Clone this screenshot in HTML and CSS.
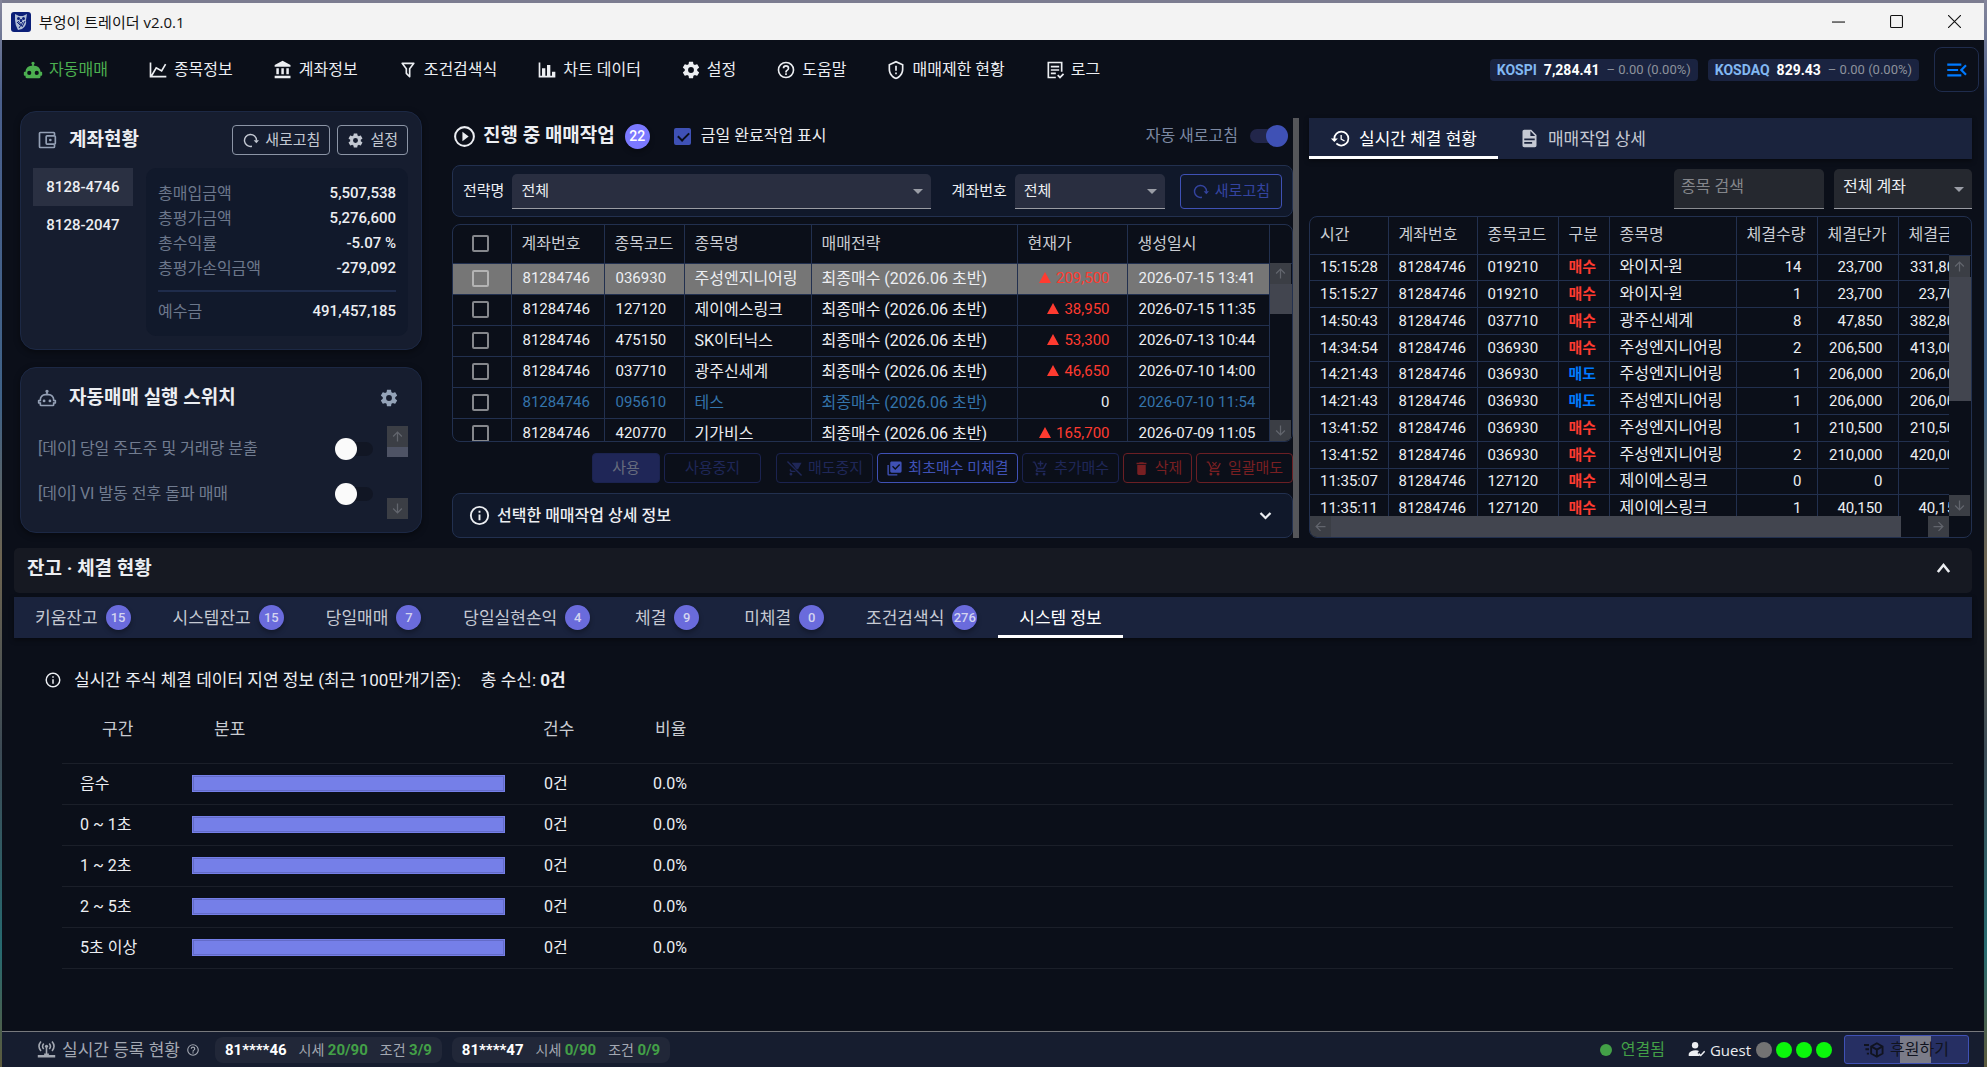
FILE: index.html
```
<!DOCTYPE html>
<html lang="ko">
    <head>
        <meta charset="utf-8">
        <title>부엉이 트레이더 v2.0.1</title>
        <link rel="stylesheet" href="styles.css">
    </head>
    <body>
        <!--ICONS-->
        <svg class="sprite" width="0" height="0">
            <symbol id="robot" viewBox="0 0 24 24"><path d="M12,2A2,2 0 0,1 14,4C14,4.74 13.6,5.39 13,5.73V7H14A7,7 0 0,1 21,14H22A1,1 0 0,1 23,15V18A1,1 0 0,1 22,19H21V20A2,2 0 0,1 19,22H5A2,2 0 0,1 3,20V19H2A1,1 0 0,1 1,18V15A1,1 0 0,1 2,14H3A7,7 0 0,1 10,7H11V5.73C10.4,5.39 10,4.74 10,4A2,2 0 0,1 12,2M7.5,13A2.5,2.5 0 0,0 5,15.5A2.5,2.5 0 0,0 7.5,18A2.5,2.5 0 0,0 10,15.5A2.5,2.5 0 0,0 7.5,13M16.5,13A2.5,2.5 0 0,0 14,15.5A2.5,2.5 0 0,0 16.5,18A2.5,2.5 0 0,0 19,15.5A2.5,2.5 0 0,0 16.5,13Z"/></symbol>
            <symbol id="robot-o" viewBox="0 0 24 24"><path d="M12,2A2,2 0 0,1 14,4C14,4.74 13.6,5.39 13,5.73V7H14A7,7 0 0,1 21,14H22A1,1 0 0,1 23,15V18A1,1 0 0,1 22,19H21V20A2,2 0 0,1 19,22H5A2,2 0 0,1 3,20V19H2A1,1 0 0,1 1,18V15A1,1 0 0,1 2,14H3A7,7 0 0,1 10,7H11V5.73C10.4,5.39 10,4.74 10,4A2,2 0 0,1 12,2M10,9A5,5 0 0,0 5,14V16H3V17H5V20H19V17H21V16H19V14A5,5 0 0,0 14,9H10Z" fill-rule="evenodd"/><circle cx="8.5" cy="15.5" r="1.7"/><circle cx="15.5" cy="15.5" r="1.7"/></symbol>
            <symbol id="line" viewBox="0 0 24 24"><path d="M16,11.78L20.24,4.45L21.97,5.45L16.74,14.5L10.23,10.75L5.46,19H22V21H2V3H4V17.54L9.5,8L16,11.78Z"/></symbol>
            <symbol id="bank" viewBox="0 0 24 24"><path d="M11.5,1L2,6V8H21V6M16,10V17H19V10M2,22H21V19H2M10,10V17H13V10M4,10V17H7V10H4Z"/></symbol>
            <symbol id="filter" viewBox="0 0 24 24"><path d="M15,19.88C15.04,20.18 14.94,20.5 14.71,20.71C14.32,21.1 13.69,21.1 13.3,20.71L9.29,16.7C9.06,16.47 8.96,16.16 9,15.87V10.75L4.21,4.62C3.87,4.19 3.95,3.56 4.38,3.22C4.57,3.08 4.78,3 5,3H19C19.22,3 19.43,3.08 19.62,3.22C20.05,3.56 20.13,4.19 19.79,4.62L15,10.75V19.88M7.04,5L11,10.06V15.58L13,17.58V10.05L16.96,5H7.04Z"/></symbol>
            <symbol id="bars" viewBox="0 0 24 24"><path d="M22,21H2V3H4V19H6V10H10V19H12V6H16V19H18V14H22V21Z"/></symbol>
            <symbol id="cog" viewBox="0 0 24 24"><path d="M12,15.5A3.5,3.5 0 0,1 8.5,12A3.5,3.5 0 0,1 12,8.5A3.5,3.5 0 0,1 15.5,12A3.5,3.5 0 0,1 12,15.5M19.43,12.97C19.47,12.65 19.5,12.33 19.5,12C19.5,11.67 19.47,11.34 19.43,11L21.54,9.37C21.73,9.22 21.78,8.95 21.66,8.73L19.66,5.27C19.54,5.05 19.27,4.96 19.05,5.05L16.56,6.05C16.04,5.66 15.5,5.32 14.87,5.07L14.5,2.42C14.46,2.18 14.25,2 14,2H10C9.75,2 9.54,2.18 9.5,2.42L9.13,5.07C8.5,5.32 7.96,5.66 7.44,6.05L4.95,5.05C4.73,4.96 4.46,5.05 4.34,5.27L2.34,8.73C2.21,8.95 2.27,9.22 2.46,9.37L4.57,11C4.53,11.34 4.5,11.67 4.5,12C4.5,12.33 4.53,12.65 4.57,12.97L2.46,14.63C2.27,14.78 2.21,15.05 2.34,15.27L4.34,18.73C4.46,18.95 4.73,19.03 4.95,18.95L7.44,17.94C7.96,18.34 8.5,18.68 9.13,18.93L9.5,21.58C9.54,21.82 9.75,22 10,22H14C14.25,22 14.46,21.82 14.5,21.58L14.87,18.93C15.5,18.67 16.04,18.34 16.56,17.94L19.05,18.95C19.27,19.03 19.54,18.95 19.66,18.73L21.66,15.27C21.78,15.05 21.73,14.78 21.54,14.63L19.43,12.97Z"/></symbol>
            <symbol id="help" viewBox="0 0 24 24"><path d="M11,18H13V16H11V18M12,2A10,10 0 0,0 2,12A10,10 0 0,0 12,22A10,10 0 0,0 22,12A10,10 0 0,0 12,2M12,20C7.59,20 4,16.41 4,12C4,7.59 7.59,4 12,4C16.41,4 20,7.59 20,12C20,16.41 16.41,20 12,20M12,6A4,4 0 0,0 8,10H10A2,2 0 0,1 12,8A2,2 0 0,1 14,10C14,12 11,11.75 11,15H13C13,12.75 16,12.5 16,10A4,4 0 0,0 12,6Z"/></symbol>
            <symbol id="shield" viewBox="0 0 24 24"><path d="M21,11C21,16.55 17.16,21.74 12,23C6.84,21.74 3,16.55 3,11V5L12,1L21,5V11M12,21C15.75,20 19,15.54 19,11.22V6.3L12,3.18L5,6.3V11.22C5,15.54 8.25,20 12,21M11,7H13V13H11V7M11,15H13V17H11V15Z"/></symbol>
            <symbol id="log" viewBox="0 0 24 24"><path d="M3 2H21V14H19V4H5V20H13V22H3ZM7 7H17V9H7ZM7 11H17V13H7ZM7 15H13V17H7ZM14.5 19L16 17.5L18 19.5L21.5 16L23 17.5L18 22.5Z"/></symbol>
            <symbol id="menu" viewBox="0 0 24 24"><path d="M21,15.61L19.59,17L14.58,12L19.59,7L21,8.39L17.44,12L21,15.61M3,6H16V8H3V6M3,13V11H13V13H3M3,18V16H16V18H3Z"/></symbol>
            <symbol id="wallet" viewBox="0 0 24 24"><g fill="none" stroke="currentColor" stroke-width="2"><path d="M21 6V4Q21 3 20 3H4Q3 3 3 4V20Q3 21 4 21H20Q21 21 21 20V18"/><rect x="11" y="7" width="11" height="10" rx="1"/></g><circle cx="16" cy="12" r="1.6"/></symbol>
            <symbol id="refresh" viewBox="0 0 24 24"><path d="M14 20.2A8.5 8.5 0 1 1 20.5 12" fill="none" stroke="currentColor" stroke-width="2"/><path d="M16.5 11.5H24L20.2 16Z"/></symbol>
            <symbol id="play" viewBox="0 0 24 24"><path d="M12,20C7.59,20 4,16.41 4,12C4,7.59 7.59,4 12,4C16.41,4 20,7.59 20,12C20,16.41 16.41,20 12,20M12,2A10,10 0 0,0 2,12A10,10 0 0,0 12,22A10,10 0 0,0 22,12A10,10 0 0,0 12,2M10,16.5L16,12L10,7.5V16.5Z"/></symbol>
            <symbol id="info" viewBox="0 0 24 24"><path d="M11,9H13V7H11M12,20C7.59,20 4,16.41 4,12C4,7.59 7.59,4 12,4C16.41,4 20,7.59 20,12C20,16.41 16.41,20 12,20M12,2A10,10 0 0,0 2,12A10,10 0 0,0 12,22A10,10 0 0,0 22,12A10,10 0 0,0 12,2M11,17H13V11H11V17Z"/></symbol>
            <symbol id="history" viewBox="0 0 24 24"><path d="M13.5,8H12V13L16.28,15.54L17,14.33L13.5,12.25V8M13,3A9,9 0 0,0 4,12H1L4.96,16.03L9,12H6A7,7 0 0,1 13,5A7,7 0 0,1 20,12A7,7 0 0,1 13,19C11.07,19 9.32,18.21 8.06,16.94L6.64,18.36C8.27,20 10.5,21 13,21A9,9 0 0,0 22,12A9,9 0 0,0 13,3"/></symbol>
            <symbol id="doc" viewBox="0 0 24 24"><path d="M13,9H18.5L13,3.5V9M6,2H14L20,8V20A2,2 0 0,1 18,22H6C4.89,22 4,21.1 4,20V4C4,2.89 4.89,2 6,2M15,18V16H6V18H15M18,14V12H6V14H18Z"/></symbol>
            <symbol id="trash" viewBox="0 0 24 24"><path d="M19,4H15.5L14.5,3H9.5L8.5,4H5V6H19M6,19A2,2 0 0,0 8,21H16A2,2 0 0,0 18,19V7H6V19Z"/></symbol>
            <symbol id="multi" viewBox="0 0 24 24"><path d="M22,16A2,2 0 0,1 20,18H8C6.89,18 6,17.1 6,16V4C6,2.89 6.89,2 8,2H20A2,2 0 0,1 22,4V16M16,20V22H4A2,2 0 0,1 2,20V7H4V20H16M13,14L20,7L18.59,5.59L13,11.17L9.91,8.09L8.5,9.5L13,14Z"/></symbol>
            <symbol id="cart" viewBox="0 0 24 24"><path d="M7 18A2 2 0 1 0 7 22A2 2 0 1 0 7 18M17 18A2 2 0 1 0 17 22A2 2 0 1 0 17 18M1 2H4.3L8.5 11H15.5L19.4 4L21.1 5L17.3 12A2 2 0 0 1 15.6 13H8.1L7.2 15H19V17H7A2 2 0 0 1 5.3 14L6.6 11.6L3 4H1Z"/><path d="M11 1H13V4H16V6H13V9H11V6H8V4H11Z"/></symbol>
            <symbol id="cart-x" viewBox="0 0 24 24"><path d="M7 18A2 2 0 1 0 7 22A2 2 0 1 0 7 18M17 18A2 2 0 1 0 17 22A2 2 0 1 0 17 18M1 2H4.3L8.5 11H15.5L19.4 4L21.1 5L17.3 12A2 2 0 0 1 15.6 13H8.1L7.2 15H19V17H7A2 2 0 0 1 5.3 14L6.6 11.6L3 4H1Z"/><path d="M9 3L15 9M15 3L9 9" stroke="currentColor" stroke-width="1.6"/></symbol>
            <symbol id="cart-off" viewBox="0 0 24 24"><path d="M8 4H22L17 13H15ZM7 18A2 2 0 1 0 7 22A2 2 0 1 0 7 18M6 12L8 15H12L14 17H7Q5 16 5 14Z"/><path d="M2 2L22 22" stroke="currentColor" stroke-width="2"/></symbol>
            <symbol id="tower" viewBox="0 0 24 24"><g fill="none" stroke="currentColor" stroke-width="2"><path d="M5 2Q0 8 5 14M19 2Q24 8 19 14M8.5 4.5Q5.5 8 8.5 11.5M15.5 4.5Q18.5 8 15.5 11.5M12 9V19"/></g><circle cx="12" cy="8" r="2"/><path d="M1 19H9V17H15V19H23V22H1Z"/></symbol>
            <symbol id="user" viewBox="0 0 24 24"><circle cx="10" cy="6" r="4.5"/><path d="M1 21V18Q3 13 11 13Q14 13 15.5 14L13.5 17L17 21Z"/><path d="M15 17.5L18 20.5L23.5 14.5" fill="none" stroke="currentColor" stroke-width="2"/></symbol>
            <symbol id="cube" viewBox="0 0 28 24"><g fill="none" stroke="currentColor" stroke-width="2.6"><path d="M18 2.5L26 7V17L18 21.5L10 17V7ZM10 7L18 11.5L26 7M18 11.5V21"/><path d="M0 5H7M2 11H7M4 17H7"/></g></symbol>
            <symbol id="up" viewBox="0 0 24 24"><path d="M12 20V5M5 12L12 5L19 12" fill="none" stroke="currentColor" stroke-width="2"/></symbol>
            <symbol id="down" viewBox="0 0 24 24"><path d="M12 4V19M5 12L12 19L19 12" fill="none" stroke="currentColor" stroke-width="2"/></symbol>
            <symbol id="left" viewBox="0 0 24 24"><path d="M20 12H5M12 5L5 12L12 19" fill="none" stroke="currentColor" stroke-width="2"/></symbol>
            <symbol id="right" viewBox="0 0 24 24"><path d="M4 12H19M12 5L19 12L12 19" fill="none" stroke="currentColor" stroke-width="2"/></symbol>
            <symbol id="chev-down" viewBox="0 0 24 24"><path d="M4 8L12 16L20 8" fill="none" stroke="currentColor" stroke-width="3.6"/></symbol>
            <symbol id="chev-up" viewBox="0 0 24 24"><path d="M4 17L12 7L20 17" fill="none" stroke="currentColor" stroke-width="3.6"/></symbol>
        </svg>

        <div class="window">
            <!--TITLE BAR-->
            <div class="titlebar">
                <svg class="logo" viewBox="0 0 20 20">
                    <rect width="20" height="20" rx="3" fill="#0b1f78"/>
                    <path d="M4 2L8 4H12L16 2L15 8Q16 14 11 17L7 18Q4 13 4 8Z" fill="#aebcd6"/>
                    <circle cx="7.5" cy="6.5" r="1.5" fill="#0b1f78"/><circle cx="12.5" cy="6.5" r="1.5" fill="#0b1f78"/>
                    <path d="M10 7L11 9L10 10L9 9ZM6 10L9 13M7 9L11 14M12 10L8 16M14 9L11 15" stroke="#0b1f78" fill="#0b1f78"/>
                </svg>
                <span class="title-text">부엉이 트레이더 v2.0.1</span>
                <div class="win-buttons">
                    <button aria-label="최소화"><svg viewBox="0 0 12 12"><path d="M0 6.5H12"/></svg></button>
                    <button aria-label="최대화"><svg viewBox="0 0 12 12"><rect x=".5" y=".5" width="11" height="11" rx="1"/></svg></button>
                    <button aria-label="닫기"><svg viewBox="0 0 12 12"><path d="M0 0L12 12M12 0L0 12"/></svg></button>
                </div>
            </div>

            <!--TOP MENU-->
            <div class="topbar">
                <nav class="menu">
                    <a href="#" class="on"><svg><use href="#robot"/></svg>자동매매</a>
                    <a href="#"><svg><use href="#line"/></svg>종목정보</a>
                    <a href="#"><svg><use href="#bank"/></svg>계좌정보</a>
                    <a href="#"><svg><use href="#filter"/></svg>조건검색식</a>
                    <a href="#"><svg><use href="#bars"/></svg>차트 데이터</a>
                    <a href="#"><svg><use href="#cog"/></svg>설정</a>
                    <a href="#"><svg><use href="#help"/></svg>도움말</a>
                    <a href="#"><svg><use href="#shield"/></svg>매매제한 현황</a>
                    <a href="#"><svg><use href="#log"/></svg>로그</a>
                </nav>
                <div class="index"><b class="index-name">KOSPI</b><b>7,284.41</b><span>– 0.00 (0.00%)</span></div>
                <div class="index"><b class="index-name">KOSDAQ</b><b>829.43</b><span>– 0.00 (0.00%)</span></div>
                <button class="drawer" aria-label="메뉴"><svg><use href="#menu"/></svg></button>
            </div>

            <div class="main">
                <!--LEFT-->
                <div class="side">
                    <section class="card account">
                        <div class="card-head">
                            <svg><use href="#wallet"/></svg>
                            <h2>계좌현황</h2>
                            <button class="outline"><svg><use href="#refresh"/></svg>새로고침</button>
                            <button class="outline"><svg><use href="#cog"/></svg>설정</button>
                        </div>
                        <div class="account-body">
                            <div class="account-tabs">
                                <button class="on">8128-4746</button>
                                <button>8128-2047</button>
                            </div>
                            <dl class="sums">
                                <div><dt>총매입금액</dt><dd>5,507,538</dd></div>
                                <div><dt>총평가금액</dt><dd>5,276,600</dd></div>
                                <div><dt>총수익률</dt><dd>-5.07 %</dd></div>
                                <div><dt>총평가손익금액</dt><dd>-279,092</dd></div>
                                <div class="deposit"><dt>예수금</dt><dd>491,457,185</dd></div>
                            </dl>
                        </div>
                    </section>

                    <section class="card switches">
                        <div class="card-head">
                            <svg><use href="#robot-o"/></svg>
                            <h2>자동매매 실행 스위치</h2>
                            <button class="plain" aria-label="설정"><svg><use href="#cog"/></svg></button>
                        </div>
                        <div class="switch-body">
                            <div class="switch-list">
                                <div><label for="sw1">[데이] 당일 주도주 및 거래량 분출</label><input type="checkbox" class="switch" id="sw1"></div>
                                <div><label for="sw2">[데이] VI 발동 전후 돌파 매매</label><input type="checkbox" class="switch" id="sw2"></div>
                            </div>
                            <div class="scroll"><i><svg><use href="#up"/></svg></i><b class="short"></b><i class="end"><svg><use href="#down"/></svg></i></div>
                        </div>
                    </section>
                </div>

                <!--RUNNING JOBS-->
                <section class="jobs">
                    <div class="jobs-head">
                        <svg><use href="#play"/></svg>
                        <h2>진행 중 매매작업</h2>
                        <span class="badge bright">22</span>
                        <input type="checkbox" class="check" id="done" checked>
                        <label for="done">금일 완료작업 표시</label>
                        <label for="auto" class="auto">자동 새로고침</label>
                        <input type="checkbox" class="switch" id="auto" checked>
                    </div>
                    <div class="filters">
                        <label for="strategy">전략명</label>
                        <span class="select wide"><select id="strategy"><option>전체</option></select></span>
                        <label for="account" class="second">계좌번호</label>
                        <span class="select"><select id="account"><option>전체</option></select></span>
                        <button class="outline blue"><svg><use href="#refresh"/></svg>새로고침</button>
                    </div>
                    <div class="jobs-box">
                        <table class="jobs-table">
                            <colgroup><col class="w58"><col class="w93"><col class="w80"><col class="w127"><col><col class="w110"><col class="w142"><col class="w23"></colgroup>
                            <thead>
                                <tr><th><input type="checkbox" class="check" aria-label="전체 선택"></th><th>계좌번호</th><th>종목코드</th><th>종목명</th><th>매매전략</th><th>현재가</th><th>생성일시</th><th></th></tr>
                            </thead>
                            <tbody>
                                <tr class="selected"><td><input type="checkbox" class="check" aria-label="036930"></td><td class="n">81284746</td><td class="n">036930</td><td>주성엔지니어링</td><td>최종매수 (2026.06 초반)</td><td class="price">209,500</td><td class="n">2026-07-15 13:41</td><td></td></tr>
                                <tr><td><input type="checkbox" class="check" aria-label="127120"></td><td class="n">81284746</td><td class="n">127120</td><td>제이에스링크</td><td>최종매수 (2026.06 초반)</td><td class="price">38,950</td><td class="n">2026-07-15 11:35</td><td></td></tr>
                                <tr><td><input type="checkbox" class="check" aria-label="475150"></td><td class="n">81284746</td><td class="n">475150</td><td>SK이터닉스</td><td>최종매수 (2026.06 초반)</td><td class="price">53,300</td><td class="n">2026-07-13 10:44</td><td></td></tr>
                                <tr><td><input type="checkbox" class="check" aria-label="037710"></td><td class="n">81284746</td><td class="n">037710</td><td>광주신세계</td><td>최종매수 (2026.06 초반)</td><td class="price">46,650</td><td class="n">2026-07-10 14:00</td><td></td></tr>
                                <tr class="finished"><td><input type="checkbox" class="check" aria-label="095610"></td><td class="n">81284746</td><td class="n">095610</td><td>테스</td><td>최종매수 (2026.06 초반)</td><td class="price zero">0</td><td class="n">2026-07-10 11:54</td><td></td></tr>
                                <tr><td><input type="checkbox" class="check" aria-label="420770"></td><td class="n">81284746</td><td class="n">420770</td><td>기가비스</td><td>최종매수 (2026.06 초반)</td><td class="price">165,700</td><td class="n">2026-07-09 11:05</td><td></td></tr>
                            </tbody>
                        </table>
                        <div class="scroll over"><i><svg><use href="#up"/></svg></i><b class="mid"></b><i class="end"><svg><use href="#down"/></svg></i></div>
                    </div>
                    <div class="actions">
                        <button class="use">사용</button>
                        <button class="stop">사용중지</button>
                        <button class="halt"><svg><use href="#cart-off"/></svg>매도중지</button>
                        <button class="live"><svg><use href="#multi"/></svg>최초매수 미체결</button>
                        <button><svg><use href="#cart"/></svg>추가매수</button>
                        <button class="red"><svg><use href="#trash"/></svg>삭제</button>
                        <button class="red"><svg><use href="#cart-x"/></svg>일괄매도</button>
                    </div>
                    <button class="detail"><svg><use href="#info"/></svg><span>선택한 매매작업 상세 정보</span><svg class="chev"><use href="#chev-down"/></svg></button>
                </section>

                <div class="splitter"></div>

                <!--REALTIME FILLS-->
                <section class="fills">
                    <div class="tabs">
                        <button class="on"><svg><use href="#history"/></svg>실시간 체결 현황</button>
                        <button><svg><use href="#doc"/></svg>매매작업 상세</button>
                    </div>
                    <div class="fills-filter">
                        <input type="text" placeholder="종목 검색" aria-label="종목 검색">
                        <span class="select"><select aria-label="계좌"><option>전체 계좌</option></select></span>
                    </div>
                    <div class="fills-box">
                        <div class="fills-clip">
                            <table class="fills-table">
                                <colgroup><col class="w78"><col class="w89"><col class="w81"><col class="w51"><col class="w127"><col class="w81"><col class="w81"><col class="w81"></colgroup>
                                <thead>
                                    <tr><th>시간</th><th>계좌번호</th><th>종목코드</th><th>구분</th><th>종목명</th><th>체결수량</th><th>체결단가</th><th>체결금액</th></tr>
                                </thead>
                                <tbody>
                                    <tr><td>15:15:28</td><td>81284746</td><td>019210</td><td class="buy">매수</td><td class="name">와이지-원</td><td>14</td><td>23,700</td><td>331,800</td></tr>
                                    <tr><td>15:15:27</td><td>81284746</td><td>019210</td><td class="buy">매수</td><td class="name">와이지-원</td><td>1</td><td>23,700</td><td>23,700</td></tr>
                                    <tr><td>14:50:43</td><td>81284746</td><td>037710</td><td class="buy">매수</td><td class="name">광주신세계</td><td>8</td><td>47,850</td><td>382,800</td></tr>
                                    <tr><td>14:34:54</td><td>81284746</td><td>036930</td><td class="buy">매수</td><td class="name">주성엔지니어링</td><td>2</td><td>206,500</td><td>413,000</td></tr>
                                    <tr><td>14:21:43</td><td>81284746</td><td>036930</td><td class="sell">매도</td><td class="name">주성엔지니어링</td><td>1</td><td>206,000</td><td>206,000</td></tr>
                                    <tr><td>14:21:43</td><td>81284746</td><td>036930</td><td class="sell">매도</td><td class="name">주성엔지니어링</td><td>1</td><td>206,000</td><td>206,000</td></tr>
                                    <tr><td>13:41:52</td><td>81284746</td><td>036930</td><td class="buy">매수</td><td class="name">주성엔지니어링</td><td>1</td><td>210,500</td><td>210,500</td></tr>
                                    <tr><td>13:41:52</td><td>81284746</td><td>036930</td><td class="buy">매수</td><td class="name">주성엔지니어링</td><td>2</td><td>210,000</td><td>420,000</td></tr>
                                    <tr><td>11:35:07</td><td>81284746</td><td>127120</td><td class="buy">매수</td><td class="name">제이에스링크</td><td>0</td><td>0</td><td>0</td></tr>
                                    <tr><td>11:35:11</td><td>81284746</td><td>127120</td><td class="buy">매수</td><td class="name">제이에스링크</td><td>1</td><td>40,150</td><td>40,150</td></tr>
                                </tbody>
                            </table>
                        </div>
                        <div class="fills-side"><div class="scroll"><i><svg><use href="#up"/></svg></i><b class="tall"></b><i class="end"><svg><use href="#down"/></svg></i></div></div>
                        <div class="scroll flat"><i><svg><use href="#left"/></svg></i><b></b><i><svg><use href="#right"/></svg></i></div>
                    </div>
                </section>
            </div>

            <!--BALANCE-->
            <section class="balance">
                <button class="balance-head">잔고 · 체결 현황<svg><use href="#chev-up"/></svg></button>
                <div class="tabs">
                    <button>키움잔고<span class="badge">15</span></button>
                    <button>시스템잔고<span class="badge">15</span></button>
                    <button>당일매매<span class="badge">7</span></button>
                    <button>당일실현손익<span class="badge">4</span></button>
                    <button>체결<span class="badge">9</span></button>
                    <button>미체결<span class="badge">0</span></button>
                    <button>조건검색식<span class="badge">276</span></button>
                    <button class="on">시스템 정보</button>
                </div>
                <p class="delay"><svg><use href="#info"/></svg><span>실시간 주식 체결 데이터 지연 정보 (최근 100만개기준):</span><span>총 수신: <b>0건</b></span></p>
                <table class="delay-table">
                    <colgroup><col class="w112"><col class="w349"><col class="w112"><col></colgroup>
                    <thead><tr><th>구간</th><th>분포</th><th>건수</th><th>비율</th></tr></thead>
                    <tbody>
                        <tr><td>음수</td><td><div class="bar"></div></td><td>0건</td><td>0.0%</td></tr>
                        <tr><td>0 ~ 1초</td><td><div class="bar"></div></td><td>0건</td><td>0.0%</td></tr>
                        <tr><td>1 ~ 2초</td><td><div class="bar"></div></td><td>0건</td><td>0.0%</td></tr>
                        <tr><td>2 ~ 5초</td><td><div class="bar"></div></td><td>0건</td><td>0.0%</td></tr>
                        <tr><td>5초 이상</td><td><div class="bar"></div></td><td>0건</td><td>0.0%</td></tr>
                    </tbody>
                </table>
            </section>

            <!--FOOTER-->
            <footer class="status">
                <svg class="tower"><use href="#tower"/></svg>
                <span class="status-title">실시간 등록 현황</span>
                <svg class="tip"><use href="#help"/></svg>
                <div class="quota"><b>81****46</b><span>시세 <em>20/90</em></span><span>조건 <em>3/9</em></span></div>
                <div class="quota"><b>81****47</b><span>시세 <em>0/90</em></span><span>조건 <em>0/9</em></span></div>
                <span class="linked">연결됨</span>
                <svg class="user"><use href="#user"/></svg>
                <span class="guest">Guest</span>
                <span class="lights"><i class="off"></i><i></i><i></i><i></i></span>
                <button class="donate"><svg><use href="#cube"/></svg>후원하기</button>
            </footer>
        </div>
    </body>
</html>
```
FILE: styles.css
```
*{
    box-sizing: border-box;
}

body{
    margin: 0;
    background: linear-gradient(#85869b 0, #4a5f8c 100px, #3f6287 400px, #6d6450 560px, #3c4a55 750px, #276a70 950px, #5d5a3c 100%);
    color: #eceef2;
    font: 16px/20px Roboto, "Noto Sans CJK KR", sans-serif;
}

button, input, select{
    font: inherit;
    color: inherit;
}

button{
    display: flex;
    align-items: center;
    justify-content: center;
    padding: 0;
    border: 0;
    background: none;
    white-space: nowrap;
}

svg{
    flex: none;
    width: 20px;
    height: 20px;
    fill: currentColor;
}

.sprite{
    position: absolute;
    width: 0;
    height: 0;
}

h2{
    margin: 0;
    font-size: 19px;
    line-height: 24px;
    font-weight: 700;
}

table{
    border-collapse: collapse;
    table-layout: fixed;
}

th{
    font-weight: 400;
    text-align: left;
    color: #c9ccd2;
}

.w23{width: 23px;}
.w51{width: 51px;}
.w58{width: 58px;}
.w78{width: 78px;}
.w80{width: 80px;}
.w81{width: 81px;}
.w89{width: 89px;}
.w93{width: 93px;}
.w110{width: 110px;}
.w112{width: 112px;}
.w127{width: 127px;}
.w142{width: 142px;}
.w349{width: 349px;}

.window{
    display: flex;
    flex-direction: column;
    min-height: calc(100vh - 3px);
    margin: 0 3px 0 2px;
    background: #0b0f19;
    border-top: 3px solid #7b7c90;
    box-sizing: content-box;
}

/* title bar */
.titlebar{
    display: flex;
    align-items: center;
    gap: 8px;
    height: 37px;
    padding-left: 9px;
    background: #f3f3f3;
    color: #111;
    font: 15px/20px "Open Sans", "Noto Sans CJK KR", sans-serif;
}

.titlebar .title-text{
    flex: 1;
}

.win-buttons{
    display: flex;
    padding-right: 1px;
}

.win-buttons button{
    width: 58px;
    height: 36px;
}

.win-buttons svg{
    width: 13px;
    height: 13px;
    fill: none;
    stroke: #111;
}

/* top menu */
.topbar{
    display: flex;
    align-items: center;
    height: 59px;
    padding: 0 5px 0 21px;
}

.menu{
    display: flex;
    flex: 1;
    gap: 40px;
}

.menu a{
    display: flex;
    align-items: center;
    gap: 6px;
    color: #eceef2;
    text-decoration: none;
    white-space: nowrap;
}

.menu a.on{
    color: #4caf50;
}

.index{
    display: flex;
    align-items: center;
    gap: 7px;
    height: 22px;
    margin-right: 10px;
    padding: 0 7px;
    border-radius: 4px;
    background: #1a2340;
    color: #8d929c;
    font-size: 14px;
    white-space: nowrap;
}

.index b{
    color: #fff;
}

.index span{
    font-size: 13px;
}

.index .index-name{
    color: #82b8f2;
}

.drawer{
    width: 45px;
    height: 45px;
    margin-left: 5px;
    border: 1px solid #1f2c4d;
    border-radius: 8px;
    color: #007aff;
}

.drawer svg{
    width: 26px;
    height: 26px;
}

/* three columns */
.main{
    display: grid;
    grid-template-columns: 402px minmax(0, 871fr) 6px minmax(0, 673fr);
    padding: 12px 12px 10px 18px;
}

.card{
    border: 1px solid #1c2844;
    border-radius: 16px;
    background: #161d2f;
    box-shadow: 0 2px 6px rgba(0, 0, 0, .4);
}

.account{
    height: 239px;
    padding: 13px 13px 0 12px;
}

.card-head{
    display: flex;
    align-items: center;
    height: 30px;
    padding-left: 4px;
    color: #94a0b5;
}

.card-head h2{
    flex: 1;
    margin-left: 12px;
    color: #eceef2;
}

.outline{
    gap: 6px;
    height: 30px;
    margin-left: 7px;
    padding: 0 9px;
    border: 1px solid #8c95a6;
    border-radius: 4px;
    color: #c3c8d2;
    font-size: 15px;
}

.outline svg{
    width: 17px;
    height: 17px;
}

.account-body{
    display: flex;
    gap: 13px;
    margin-top: 13px;
}

.account-tabs button{
    width: 100px;
    height: 38px;
    font-size: 15px;
    font-weight: 500;
}

.account-tabs .on{
    background: #2a3042;
}

.sums{
    flex: 1;
    height: 168px;
    margin: 0;
    padding: 13px 12px;
    border-radius: 10px;
    background: #11192b;
}

.sums div{
    display: flex;
    justify-content: space-between;
    height: 25px;
    line-height: 25px;
}

.sums dt{
    color: #6c778b;
}

.sums dd{
    margin: 0;
    font-size: 15px;
    font-weight: 500;
}

.sums .deposit{
    height: auto;
    margin-top: 9px;
    padding-top: 7px;
    border-top: 2px solid #1f2c4b;
}

.switches{
    height: 166px;
    margin-top: 17px;
    padding: 15px 12px 0;
}

.plain{
    margin-right: 10px;
    color: #94a3b8;
}

.switch-body{
    display: flex;
    margin-top: 13px;
    padding-left: 5px;
}

.switch-list{
    flex: 1;
    color: #717c90;
}

.switch-list div{
    display: flex;
    align-items: center;
    justify-content: space-between;
    height: 45px;
    padding-right: 14px;
}

.switch{
    appearance: none;
    position: relative;
    width: 38px;
    height: 22px;
    margin: 0;
}

.switch::before{
    content: "";
    position: absolute;
    inset: 4px 0 4px 4px;
    border-radius: 7px;
    background: #111624;
}

.switch::after{
    content: "";
    position: absolute;
    left: 0;
    width: 22px;
    height: 22px;
    border-radius: 50%;
    background: #fafafa;
}

.switch:checked::before{
    inset: 4px 4px 4px 0;
    background: #22264a;
}

.switch:checked::after{
    left: 16px;
    background: #3f51b5;
}

.scroll{
    display: flex;
    flex-direction: column;
    width: 22px;
}

.scroll i{
    display: flex;
    align-items: center;
    justify-content: center;
    width: 21px;
    height: 21px;
    background: #3b3e45;
    color: #62656d;
}

.scroll i svg{
    width: 15px;
    height: 15px;
}

.scroll b{
    background: #42454f;
}

.scroll .end{
    margin-top: auto;
}

.scroll .short{height: 10px; margin-right: 1px; background: #4e5365;}
.scroll .mid{height: 30px;}
.scroll .tall{height: 124px;}

.switch-body .scroll{
    height: 93px;
}

/* running jobs */
.jobs{
    display: flex;
    flex-direction: column;
    margin: 7px 0 0 30px;
}

.jobs-head{
    display: flex;
    align-items: center;
    height: 36px;
    padding-right: 5px;
}

.jobs-head > svg{
    width: 25px;
    height: 25px;
}

.jobs-head h2{
    margin: 0 10px 0 6px;
}

.jobs-head .check{
    margin: 0 10px 0 24px;
}

.badge{
    display: flex;
    align-items: center;
    justify-content: center;
    width: 25px;
    height: 25px;
    border-radius: 50%;
    background: #6a6bdc;
    color: #d3d4f0;
    font-size: 13px;
    font-weight: 500;
    box-shadow: 0 3px 5px rgba(0, 0, 0, .3);
}

.badge.bright{
    background: #7b79ff;
    color: #fff;
    font-size: 14px;
}

.check{
    appearance: none;
    position: relative;
    display: block;
    width: 17px;
    height: 17px;
    margin: 0;
    border: 2px solid #85878c;
    border-radius: 2px;
}

.check:checked{
    border-color: #3f51b5;
    background: #3f51b5;
}

.check:checked::after{
    content: "";
    position: absolute;
    left: 4px;
    top: 0;
    width: 5px;
    height: 9px;
    border: solid #0b0f19;
    border-width: 0 2px 2px 0;
    transform: rotate(45deg);
}

.auto{
    margin: 0 12px 0 auto;
    color: #7c89a3;
}

.filters{
    display: flex;
    align-items: center;
    height: 52px;
    margin-top: 11px;
    padding: 0 10px;
    border: 1px solid #22304f;
    border-radius: 8px;
    background: #10182a;
    font-size: 15px;
    white-space: nowrap;
}

.filters .second{
    margin-left: 21px;
}

.select{
    position: relative;
    width: 150px;
    height: 35px;
    margin-left: 8px;
}

.select.wide{
    flex: 1;
}

.select::after{
    content: "";
    position: absolute;
    right: 8px;
    top: 15px;
    border: 5px solid transparent;
    border-top-color: #9a9da6;
    border-bottom: 0;
}

.select select{
    appearance: none;
    width: 100%;
    height: 100%;
    padding: 0 9px;
    border: 0;
    border-bottom: 1px solid #9a9ca3;
    border-radius: 5px 5px 0 0;
    background: #292e40;
}

.outline.blue{
    height: 35px;
    margin-left: 15px;
    padding: 0 11px;
    border-color: #3f51b5;
    color: #3444a0;
}

.jobs-box{
    position: relative;
    overflow: hidden;
    height: 218px;
    margin-top: 7px;
    border: 1px solid #22304f;
    border-radius: 8px;
}

.jobs-table{
    width: 100%;
}

.jobs-table th, .jobs-table td{
    padding: 0 0 0 10px;
    border: 1px solid #22304f;
    border-top: 0;
    white-space: nowrap;
}

.jobs-table th:first-child, .jobs-table td:first-child{
    padding-left: 19px;
    border-left: 0;
}

.jobs-table th:last-child, .jobs-table td:last-child{
    border-right: 0;
}

.jobs-table th{
    height: 38px;
}

.jobs-table td{
    height: 31px;
}

.jobs-table td:last-child{
    border-bottom: 0;
    background: #0b0f19;
}

.jobs-table .n{
    padding: 0 0 2px 11px;
    font-size: 15px;
}

.jobs-table .price{
    padding: 0 17px 2px 0;
    color: #ff3b30;
    font-size: 15px;
    text-align: right;
}

.price::before{
    content: "";
    display: inline-block;
    margin-right: 5px;
    border: 6px solid transparent;
    border-top: 0;
    border-bottom: 11px solid #ff3b30;
}

.price.zero::before{
    display: none;
}

.jobs-table .selected td:not(:last-child){
    background: #767676;
}

.selected .check{
    border-color: #b3b3b3;
}

.finished{
    color: #3474ab;
}

.finished .zero.price{
    color: #eceef2;
}

.scroll.over{
    position: absolute;
    top: 38px;
    right: 0;
    bottom: 0;
}

.actions{
    display: flex;
    justify-content: flex-end;
    gap: 4px;
    margin-top: 11px;
    font-size: 15px;
}

.actions button{
    gap: 5px;
    width: 97px;
    height: 30px;
    border: 1px solid #1b2350;
    border-radius: 4px;
    color: #1f2758;
}

.actions svg{
    width: 17px;
    height: 17px;
}

.actions .use{
    width: 68px;
    background: #1f2657;
    color: #676c7d;
}

.actions .halt{
    margin-left: 11px;
}

.actions .live{
    width: 141px;
    border-color: #3f51b5;
    color: #3f51b5;
}

.actions .red{
    border-color: #6b1f24;
    color: #781f22;
}

.actions .red:nth-child(6){
    width: 69px;
}

.detail{
    gap: 6px;
    height: 45px;
    margin-top: 10px;
    padding: 0 19px 0 15px;
    border: 1px solid #22304f;
    border-radius: 8px;
    background: #10182a;
    font-weight: 500;
}

.detail svg{
    width: 23px;
    height: 23px;
}

.detail .chev{
    width: 15px;
    height: 15px;
    margin-left: auto;
}

.splitter{
    margin-top: 7px;
    background: #55565a;
}

/* realtime fills */
.fills{
    margin: 7px 0 0 10px;
}

.tabs{
    display: flex;
    height: 41px;
    background: #1a233d;
    box-shadow: 0 2px 5px rgba(0, 0, 0, .4);
    color: #c5c9d3;
    font-size: 17px;
}

.tabs button{
    gap: 8px;
    min-width: 112px;
    padding: 0 21px;
    border: solid transparent;
    border-width: 3px 0;
}

.tabs .on{
    border-bottom-color: #fff;
    color: #fff;
}

.fills .tabs svg{
    width: 21px;
    height: 21px;
}

.fills-filter{
    display: flex;
    justify-content: flex-end;
    gap: 2px;
    margin-top: 10px;
}

.fills-filter input{
    width: 150px;
    height: 40px;
    padding: 0 7px 4px;
    border: 0;
    border-bottom: 1px solid #8a8c91;
    border-radius: 5px 5px 0 0;
    background: #25282f;
}

.fills-filter input::placeholder{
    color: #84868b;
}

.fills-filter .select{
    width: 138px;
    height: 40px;
}

.fills-filter .select::after{
    top: 18px;
}

.fills-filter select{
    padding-bottom: 3px;
    background: #25282f;
}

.fills-box{
    display: grid;
    grid-template-columns: minmax(0, 1fr) 22px;
    overflow: hidden;
    height: 322px;
    margin-top: 7px;
    border: 1px solid #22304f;
    border-radius: 8px;
}

.fills-clip{
    overflow: hidden;
    height: 299px;
}

.fills-table{
    width: 669px;
    height: 305px;
}

.fills-table th, .fills-table td{
    padding: 0 0 0 10px;
    border: 1px solid #22304f;
    border-width: 0 1px 1px 0;
    white-space: nowrap;
}

.fills-table th{
    height: 37px;
}

.fills-table td{
    height: 26px;
    font-size: 15px;
}

.fills-table .name{
    font-size: 16px;
}

.fills-table td:nth-child(n+6){
    padding-right: 15px;
    text-align: right;
}

.fills-table .buy{
    color: #ff3b30;
    font-weight: 700;
}

.fills-table .sell{
    color: #007aff;
    font-weight: 700;
}

.fills-side{
    display: flex;
    flex-direction: column;
}

.fills-side::before{
    content: "";
    height: 38px;
    border-bottom: 1px solid #22304f;
}

.fills-side .scroll{
    flex: 1;
}

.scroll.flat{
    flex-direction: row;
    justify-content: space-between;
    width: 100%;
}

.scroll.flat b{
    flex: 1;
    height: 21px;
    margin-right: 27px;
}

/* balance */
.balance{
    flex: 1;
    padding: 0 12px;
}

.balance-head{
    justify-content: space-between;
    width: 100%;
    height: 45px;
    padding: 0 20px 4px 13px;
    border-radius: 5px;
    background: #161922;
    font-size: 19px;
    font-weight: 700;
}

.balance-head svg{
    width: 17px;
    height: 17px;
}

.balance .tabs{
    margin-top: 4px;
}

.delay{
    display: flex;
    align-items: center;
    gap: 12px;
    margin: 32px 0 0 30px;
    font-size: 17px;
}

.delay svg{
    width: 18px;
    height: 18px;
}

.delay span + span{
    margin-left: 8px;
}

.delay-table{
    width: calc(100% - 67px);
    margin: 5px 19px 0 48px;
}

.delay-table th, .delay-table td{
    padding: 0 18px;
    border-bottom: 1px solid #1b1f29;
}

.delay-table th{
    height: 68px;
    padding-left: 40px;
    font-size: 17px;
}

.delay-table th:nth-child(n+3){
    padding-left: 20px;
}

.delay-table td{
    height: 41px;
}

.delay-table td:nth-child(n+3){
    padding-left: 21px;
}

.delay-table td:last-child{
    padding-left: 18px;
}

.bar{
    height: 17px;
    border: 1px solid #757fe8;
    background: #757fe8;
    box-shadow: inset 0 0 0 1px #636bc8;
}

/* footer */
.status{
    display: flex;
    align-items: center;
    height: 36px;
    padding: 0 15px 0 35px;
    border-top: 1px solid #77797d;
    background: #161d2f;
    color: #a3a8b2;
    white-space: nowrap;
}

.status .tower{
    width: 19px;
    height: 19px;
}

.status-title{
    margin: 0 6px;
    font-size: 17px;
}

.status .tip{
    width: 14px;
    height: 14px;
    margin-right: 15px;
}

.quota{
    display: flex;
    align-items: center;
    gap: 12px;
    height: 26px;
    margin-right: 10px;
    padding: 0 10px;
    border-radius: 8px;
    background: #212738;
    font-size: 14px;
}

.quota b{
    color: #fff;
    font-size: 15px;
}

.quota em{
    color: #43a047;
    font-size: 15px;
    font-style: normal;
    font-weight: 700;
}

.linked{
    display: flex;
    align-items: center;
    gap: 9px;
    margin-left: auto;
    color: #43a047;
}

.linked::before{
    content: "";
    width: 12px;
    height: 12px;
    border-radius: 50%;
    background: #43a047;
}

.status .user{
    width: 17px;
    height: 17px;
    margin: 0 5px 0 23px;
    color: #eceef2;
}

.guest{
    color: #eceef2;
    font-family: "Open Sans", sans-serif;
    font-size: 15px;
}

.lights{
    display: flex;
    gap: 4px;
    margin: 0 12px 0 5px;
}

.lights i{
    width: 16px;
    height: 16px;
    border-radius: 50%;
    background: #0bf70b;
}

.lights .off{
    background: #737373;
}

.donate{
    gap: 6px;
    width: 125px;
    height: 29px;
    border: 1px solid #3f51b5;
    border-radius: 3px;
    background: linear-gradient(90deg, transparent 55px, #7b7c89 55px, #7b7c89 86px, transparent 86px), #262f63;
    color: #10131f;
}
```
